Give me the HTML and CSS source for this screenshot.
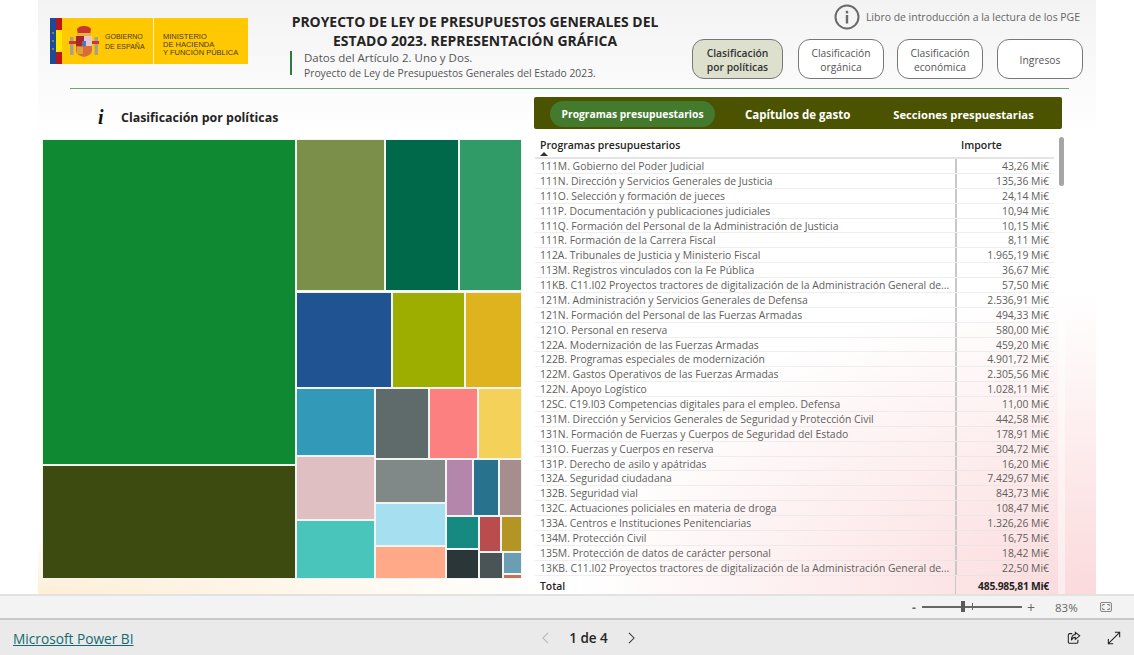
FILE: index.html
```html
<!DOCTYPE html>
<html lang="es">
<head>
<meta charset="utf-8">
<title>Presupuestos Generales 2023</title>
<link rel="stylesheet" href="styles.css">
</head>
<body>
<div class="page">
  <main class="canvas">
    <header class="top">
      <div class="logo">
        <svg class="flag" viewBox="0 0 12 46" aria-hidden="true">
          <rect width="6" height="46" fill="#1f4a96"/>
          <rect x="6" width="6" height="46" fill="#b9151b"/>
          <rect x="6" y="12" width="6" height="22" fill="#ffe800"/>
          <circle cx="3" cy="15" r=".8" fill="#ffc800"/><circle cx="3" cy="23" r=".8" fill="#ffc800"/><circle cx="3" cy="31" r=".8" fill="#ffc800"/>
        </svg>
        <svg class="arms" viewBox="0 0 30 32" aria-hidden="true">
          <rect x="1" y="12" width="3.5" height="18" fill="#a9a08c"/>
          <rect x="25.500" y="12" width="3.500" height="18" fill="#a9a08c"/>
          <path d="M0 16h7v3H0zM23 16h7v3h-7z" fill="#c8382c"/>
          <path d="M8 4c2-4 12-4 14 0l-1 6H9z" fill="#c8382c"/>
          <rect x="8" y="8" width="14" height="3" fill="#e9b23c"/>
          <path d="M7 11h16v14c0 5-5 6-8 7-3-1-8-2-8-7z" fill="#d96b3a"/>
          <rect x="7" y="11" width="8" height="10" fill="#a8262a"/>
          <rect x="15" y="11" width="8" height="10" fill="#e6c6cf"/>
          <rect x="13" y="16" width="4" height="5" fill="#4a78b8"/>
          <path d="M8 22h6v7H8z" fill="#d9a23a"/>
        </svg>
        <div class="logo-gov">GOBIERNO<br>DE ESPAÑA</div>
        <div class="logo-min">MINISTERIO<br>DE HACIENDA<br>Y FUNCIÓN PÚBLICA</div>
      </div>
      <div class="heading">
        <h1 class="title">PROYECTO DE LEY DE PRESUPUESTOS GENERALES DEL ESTADO 2023. REPRESENTACIÓN GRÁFICA</h1>
        <div class="subtitle">
          <div class="sub-main">Datos del Artículo 2. Uno y Dos.</div>
          <div class="sub-small">Proyecto de Ley de Presupuestos Generales del Estado 2023.</div>
        </div>
      </div>
      <div class="actions">
        <div class="book">
          <svg class="book-icon" viewBox="0 0 26 26" aria-hidden="true">
            <circle cx="13" cy="13" r="11.500" fill="none" stroke="#6a6a6a" stroke-width="2"/>
            <rect x="11.800" y="11" width="2.400" height="8.500" fill="#6a6a6a"/>
            <rect x="11.800" y="6.800" width="2.400" height="2.600" fill="#6a6a6a"/>
          </svg>
          <span>Libro de introducción a la lectura de los PGE</span>
        </div>
        <div class="buttons">
          <div class="btn btn-active btn-w1">Clasificación<br>por políticas</div>
          <div class="btn btn-w2 btn-org">Clasificación<br>orgánica</div>
          <div class="btn btn-w2 btn-eco">Clasificación<br>económica</div>
          <div class="btn btn-w2 btn-ing">Ingresos</div>
        </div>
      </div>
    </header>
    <div class="rule"></div>
    <div class="content">
      <section class="left">
        <div class="left-title"><span class="i-mark">i</span><h2>Clasificación por políticas</h2></div>
        <div class="treemap">
          <div class="tile" style="left:0;top:0;width:254px;height:326px;background:#108a32"></div>
          <div class="tile" style="left:0;top:326px;width:254px;height:114px;background:#3d4a10"></div>
          <div class="tile" style="left:254px;top:0;width:89px;height:152px;background:#7c8f48"></div>
          <div class="tile" style="left:343px;top:0;width:74px;height:152px;background:#00694a"></div>
          <div class="tile" style="left:417px;top:0;width:63px;height:152px;background:#319b68"></div>
          <div class="tile" style="left:254px;top:153px;width:96px;height:96px;background:#1f5391"></div>
          <div class="tile" style="left:350px;top:153px;width:73px;height:96px;background:#9eae00"></div>
          <div class="tile" style="left:423px;top:153px;width:57px;height:96px;background:#deb31e"></div>
          <div class="tile" style="left:254px;top:249px;width:79px;height:68px;background:#3399b8"></div>
          <div class="tile" style="left:333px;top:249px;width:54px;height:71px;background:#5f6b6b"></div>
          <div class="tile" style="left:387px;top:249px;width:49px;height:71px;background:#fd8080"></div>
          <div class="tile" style="left:436px;top:249px;width:44px;height:71px;background:#f4d25a"></div>
          <div class="tile" style="left:254px;top:317px;width:79px;height:64px;background:#dfbfc2"></div>
          <div class="tile" style="left:254px;top:381px;width:79px;height:59px;background:#4ac5bb"></div>
          <div class="tile" style="left:333px;top:320px;width:71px;height:44px;background:#808888"></div>
          <div class="tile" style="left:333px;top:364px;width:71px;height:43px;background:#a6dfef"></div>
          <div class="tile" style="left:333px;top:407px;width:71px;height:33px;background:#ffa988"></div>
          <div class="tile" style="left:404px;top:320px;width:27px;height:57px;background:#b586ab"></div>
          <div class="tile" style="left:431px;top:320px;width:26px;height:57px;background:#29728e"></div>
          <div class="tile" style="left:457px;top:320px;width:23px;height:57px;background:#a78e8e"></div>
          <div class="tile" style="left:404px;top:377px;width:33px;height:33px;background:#168980"></div>
          <div class="tile" style="left:437px;top:377px;width:22px;height:36px;background:#b94c4c"></div>
          <div class="tile" style="left:459px;top:377px;width:21px;height:36px;background:#b49423"></div>
          <div class="tile" style="left:404px;top:410px;width:33px;height:30px;background:#2b3638"></div>
          <div class="tile" style="left:437px;top:413px;width:24px;height:27px;background:#4a5356"></div>
          <div class="tile" style="left:461px;top:413px;width:19px;height:22px;background:#6a9fb3"></div>
          <div class="tile" style="left:461px;top:435px;width:19px;height:5px;background:#bf7559"></div>
        </div>
      </section>
      <section class="right">
        <nav class="tabs">
          <div class="tab tab-active">Programas presupuestarios</div>
          <div class="tab tab-2">Capítulos de gasto</div>
          <div class="tab tab-3">Secciones prespuestarias</div>
        </nav>
        <div class="table-wrap">
          <div class="thead">
            <div class="th-name">Programas presupuestarios<span class="sort"></span></div>
            <div class="th-amt">Importe</div>
          </div>
          <div class="row"><div class="name">111M. Gobierno del Poder Judicial</div><div class="amt">43,26 Mi€</div></div>
          <div class="row"><div class="name">111N. Dirección y Servicios Generales de Justicia</div><div class="amt">135,36 Mi€</div></div>
          <div class="row"><div class="name">111O. Selección y formación de jueces</div><div class="amt">24,14 Mi€</div></div>
          <div class="row"><div class="name">111P. Documentación y publicaciones judiciales</div><div class="amt">10,94 Mi€</div></div>
          <div class="row"><div class="name">111Q. Formación del Personal de la Administración de Justicia</div><div class="amt">10,15 Mi€</div></div>
          <div class="row"><div class="name">111R. Formación de la Carrera Fiscal</div><div class="amt">8,11 Mi€</div></div>
          <div class="row"><div class="name">112A. Tribunales de Justicia y Ministerio Fiscal</div><div class="amt">1.965,19 Mi€</div></div>
          <div class="row"><div class="name">113M. Registros vinculados con la Fe Pública</div><div class="amt">36,67 Mi€</div></div>
          <div class="row"><div class="name">11KB. C11.I02 Proyectos tractores de digitalización de la Administración General de...</div><div class="amt">57,50 Mi€</div></div>
          <div class="row"><div class="name">121M. Administración y Servicios Generales de Defensa</div><div class="amt">2.536,91 Mi€</div></div>
          <div class="row"><div class="name">121N. Formación del Personal de las Fuerzas Armadas</div><div class="amt">494,33 Mi€</div></div>
          <div class="row"><div class="name">121O. Personal en reserva</div><div class="amt">580,00 Mi€</div></div>
          <div class="row"><div class="name">122A. Modernización de las Fuerzas Armadas</div><div class="amt">459,20 Mi€</div></div>
          <div class="row"><div class="name">122B. Programas especiales de modernización</div><div class="amt">4.901,72 Mi€</div></div>
          <div class="row"><div class="name">122M. Gastos Operativos de las Fuerzas Armadas</div><div class="amt">2.305,56 Mi€</div></div>
          <div class="row"><div class="name">122N. Apoyo Logístico</div><div class="amt">1.028,11 Mi€</div></div>
          <div class="row"><div class="name">12SC. C19.I03 Competencias digitales para el empleo. Defensa</div><div class="amt">11,00 Mi€</div></div>
          <div class="row"><div class="name">131M. Dirección y Servicios Generales de Seguridad y Protección Civil</div><div class="amt">442,58 Mi€</div></div>
          <div class="row"><div class="name">131N. Formación de Fuerzas y Cuerpos de Seguridad del Estado</div><div class="amt">178,91 Mi€</div></div>
          <div class="row"><div class="name">131O. Fuerzas y Cuerpos en reserva</div><div class="amt">304,72 Mi€</div></div>
          <div class="row"><div class="name">131P. Derecho de asilo y apátridas</div><div class="amt">16,20 Mi€</div></div>
          <div class="row"><div class="name">132A. Seguridad ciudadana</div><div class="amt">7.429,67 Mi€</div></div>
          <div class="row"><div class="name">132B. Seguridad vial</div><div class="amt">843,73 Mi€</div></div>
          <div class="row"><div class="name">132C. Actuaciones policiales en materia de droga</div><div class="amt">108,47 Mi€</div></div>
          <div class="row"><div class="name">133A. Centros e Instituciones Penitenciarias</div><div class="amt">1.326,26 Mi€</div></div>
          <div class="row"><div class="name">134M. Protección Civil</div><div class="amt">16,75 Mi€</div></div>
          <div class="row"><div class="name">135M. Protección de datos de carácter personal</div><div class="amt">18,42 Mi€</div></div>
          <div class="row"><div class="name">13KB. C11.I02 Proyectos tractores de digitalización de la Administración General de...</div><div class="amt">22,50 Mi€</div></div>
          <div class="row row-total"><div class="name">Total</div><div class="amt">485.985,81 Mi€</div></div>
          <div class="scroll-track"><div class="scroll-thumb"></div></div>
        </div>
      </section>
    </div>
  </main>
  <div class="zoombar">
    <span class="z-minus">-</span>
    <div class="slider"><span class="z-thumb"></span><span class="z-tick"></span></div>
    <span class="z-plus">+</span>
    <span class="z-pct">83%</span>
    <svg class="z-fit" viewBox="0 0 14 12" aria-hidden="true">
      <rect x=".5" y=".5" width="13" height="11" rx="1.500" fill="none" stroke="#666"/>
      <path d="M3 5V3h2.500M11 5V3H8.500M3 7v2h2.500M11 7v2H8.500" fill="none" stroke="#666"/>
    </svg>
  </div>
  <footer class="footer">
    <a class="pbi" href="#">Microsoft Power BI</a>
    <div class="pager">
      <svg class="chev" viewBox="0 0 8 14" aria-hidden="true"><path d="M7 1 1 7l6 6" fill="none" stroke="#b4b4b4" stroke-width="1.200"/></svg>
      <span class="page-num">1 de 4</span>
      <svg class="chev" viewBox="0 0 8 14" aria-hidden="true"><path d="m1 1 6 6-6 6" fill="none" stroke="#333" stroke-width="1.200"/></svg>
    </div>
    <div class="foot-icons">
      <svg class="f-icon" viewBox="0 0 16 16" aria-hidden="true">
        <path d="M6 3H3a1.500 1.500 0 0 0-1.500 1.500v8A1.500 1.500 0 0 0 3 14h8a1.500 1.500 0 0 0 1.500-1.500V10" fill="none" stroke="#222" stroke-width="1.200"/>
        <path d="M9.500 1.500 14.500 5.500 9.500 9.500V7.300C7.500 7.300 6 8.300 5 10.500 5 7 6.800 4.300 9.500 4z" fill="none" stroke="#222" stroke-width="1.200"/>
      </svg>
      <svg class="f-icon" viewBox="0 0 16 16" aria-hidden="true">
        <path d="M1.500 14.500 14.500 1.500M9 1.500h5.500V7M7 14.500H1.500V9" fill="none" stroke="#222" stroke-width="1.200"/>
      </svg>
    </div>
  </footer>
</div>
</body>
</html>
```

FILE: styles.css
```css
* { box-sizing: border-box; }
html, body { margin: 0; padding: 0; height: 100%; background: #fff; overflow: hidden; }
body { font-family: "Open Sans", "Liberation Sans", sans-serif; color: #333; }
h1, h2 { margin: 0; }
.page { width: 1134px; height: 655px; display: flex; flex-direction: column; }

.canvas {
  height: 594px; margin: 0 38px; width: 1058px; overflow: hidden;
  background:
    radial-gradient(ellipse 520px 300px at 100% 100%, #fbdadc 0%, rgba(251,218,220,0) 100%),
    radial-gradient(ellipse 520px 60px at 0% 100%, #fdeed6 0%, rgba(253,238,214,0) 100%),
    linear-gradient(180deg, #f3f3f3 0, #ffffff 135px);
}

.top { height: 88px; display: flex; padding-left: 12px; }
.logo { width: 198px; height: 46px; margin-top: 18px; background: #ffc800; display: flex; flex: none; }
.flag { width: 12px; height: 46px; display: block; }
.arms { width: 30px; height: 32px; margin: 7px 0 0 7px; flex: none; }
.logo-gov { font: 7px/10px "Liberation Sans", sans-serif; color: #4a3a10; margin: 14px 0 0 6px; width: 48px; }
.logo-min { font: 7.500px/8px "Liberation Sans", sans-serif; color: #4a3a10; padding: 15px 0 0 9px; border-left: 1px solid #fff3c0; height: 46px; white-space: nowrap; }

.heading { width: 372px; margin-left: 42px; flex: none; }
.title { font-size: 13.950px; line-height: 19px; font-weight: 700; color: #252423; text-align: center; margin: 12px -2px 0 -4px; }
.subtitle { border-left: 2px solid #2f7a3c; margin-top: 4px; padding-left: 12px; height: 24px; color: #555; }
.sub-main { font-size: 11.500px; line-height: 13px; margin-top: -3px; }
.sub-small { font-size: 10.300px; line-height: 14px; margin-top: 2px; white-space: nowrap; }

.actions { width: 391px; margin-left: 30px; flex: none; display: flex; flex-direction: column; }
.book { height: 39px; display: flex; align-items: flex-start; padding-top: 4px; justify-content: flex-end; font-size: 10.450px; color: #666; white-space: nowrap; }
.book span { line-height: 26px; margin-right: 3px; }
.book-icon { width: 26px; height: 26px; margin-right: 6px; }
.buttons { display: flex; }
.btn { height: 40px; padding-top: 1px; border: 1px solid #777; border-radius: 12px; background: #fff; display: flex; align-items: center; justify-content: center; text-align: center; font-size: 10.300px; line-height: 14px; color: #555; }
.btn-w1 { width: 91px; }
.btn-w2 { width: 86px; }
.btn-org { margin-left: 15px; }
.btn-eco { margin-left: 13px; }
.btn-ing { margin-left: 14px; }
.btn-active { background: #dde0cd; color: #333; font-weight: 600; }

.rule { height: 1px; margin: 0 27px 0 32px; background: #6fa477; }

.content { display: flex; }
.left { width: 496px; flex: none; padding-left: 4px; }
.left-title { height: 50px; display: flex; align-items: center; padding: 6px 0 0 56px; }
.i-mark { font: italic 700 20px/1 "Liberation Serif", serif; color: #111; width: 23px; }
.left-title h2 { font-size: 12.400px; font-weight: 700; color: #252423; }
.treemap { position: relative; width: 480px; height: 440px; }
.tile { position: absolute; border: 1px solid #f1f4f1; }

.right { width: 528px; flex: none; }
.tabs { height: 32px; margin-top: 8px; background: #4b5200; border-radius: 2px; display: flex; align-items: center; padding: 2px 0 0 16px; color: #fff; font-size: 11.500px; font-weight: 700; white-space: nowrap; }
.tab-active { width: 165px; height: 26px; line-height: 26px; border-radius: 13px; background: #447a2e; text-align: center; font-size: 10.300px; }
.tab-2 { margin: 1px 0 0 30px; }
.tab-3 { margin: 1px 0 0 43px; font-size: 11.200px; }

.table-wrap { position: relative; margin: 8px 0 0 1px; width: 531px; }
.thead { width: 519px; height: 22px; display: flex; border-bottom: 2px solid #e4e4e4; font-size: 10.500px; font-weight: 600; color: #252423; line-height: 16px; }
.th-name { flex: 1; padding-left: 5px; position: relative; }
.th-amt { width: 98px; padding-left: 5px; }
.sort { position: absolute; left: 5px; top: 15px; width: 0; height: 0; border: 4px solid transparent; border-top: 0; border-bottom: 4px solid #333; }
.row { width: 519px; height: 14.890px; display: flex; font-size: 10.400px; line-height: 14px; color: #605e5c; border-bottom: 1px solid rgba(225,225,225,.55); }
.name { flex: 1; min-width: 0; padding: 0 5px; white-space: nowrap; overflow: hidden; }
.amt { width: 99px; flex: none; padding-right: 5px; text-align: right; border-left: 2px solid #c8c8c8; white-space: nowrap; }
.row-total { height: 19px; border-bottom: 0; color: #252423; line-height: 21px; }
.row-total .name { font-weight: 600; }
.row-total .amt { border-left-width: 1px; font-weight: 700; font-size: 10.300px; letter-spacing: -.25px; }
.scroll-track { position: absolute; left: 523px; top: 0; width: 7px; bottom: 0; background: rgba(255,255,255,.45); border-radius: 3px; }
.scroll-thumb { height: 49px; background: #a6a6a6; border-radius: 3px; margin-left: 1px; width: 5px; }

.zoombar { height: 26px; flex: none; display: flex; align-items: center; padding-left: 912px; background: #f3f3f3; border-top: 2px solid #e2e2e2; border-bottom: 2px solid #c8c8c8; color: #666; font-size: 12px; }
.z-minus { width: 10px; font-weight: 700; }
.slider { width: 100px; height: 1.500px; background: #666; position: relative; }
.z-thumb { position: absolute; left: 39px; top: -5px; width: 4px; height: 11px; background: #5a5a5a; }
.z-tick { position: absolute; left: 50px; top: -3px; width: 1px; height: 7px; background: #666; }
.z-plus { margin-left: 5px; width: 14px; font-size: 14px; }
.z-pct { margin-left: 14px; width: 38px; font-size: 11.500px; }
.z-fit { width: 14px; height: 10px; margin-left: 6px; }

.footer { flex: 1; padding-top: 2px; background: #eaeaea; display: flex; align-items: center; }
.pbi { margin-left: 13px; width: 120px; font-size: 13.700px; color: #146a6e; text-decoration: underline; white-space: nowrap; }
.pager { margin-left: 409px; display: flex; align-items: center; color: #252423; width: 93px; justify-content: space-between; margin-top: -2px; }
.page-num { font-size: 13.500px; font-weight: 600; }
.chev { width: 7px; height: 12px; }
.foot-icons { margin-left: auto; display: flex; gap: 26px; padding-right: 13px; margin-top: -2px; }
.f-icon { width: 14px; height: 14px; }
```
